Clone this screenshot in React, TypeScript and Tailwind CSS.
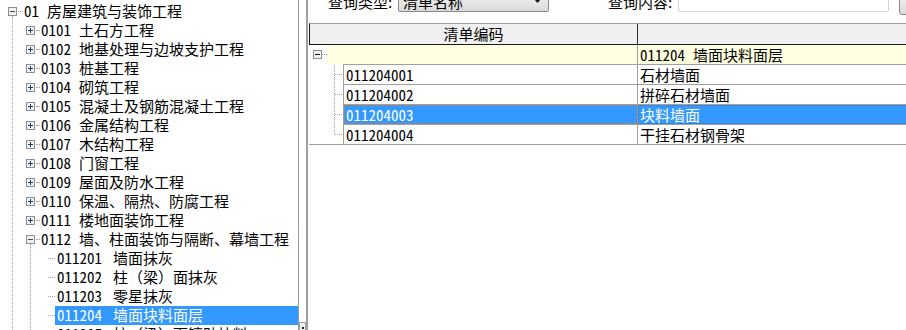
import React from 'react'

// ─── Data ─────────────────────────────────────────────────────────────────────
const chapters: [string, string][] = [
  ['0101', '土石方工程'],
  ['0102', '地基处理与边坡支护工程'],
  ['0103', '桩基工程'],
  ['0104', '砌筑工程'],
  ['0105', '混凝土及钢筋混凝土工程'],
  ['0106', '金属结构工程'],
  ['0107', '木结构工程'],
  ['0108', '门窗工程'],
  ['0109', '屋面及防水工程'],
  ['0110', '保温、隔热、防腐工程'],
  ['0111', '楼地面装饰工程'],
]

const sections: [string, string][] = [
  ['011201', '墙面抹灰'],
  ['011202', '柱（梁）面抹灰'],
  ['011203', '零星抹灰'],
  ['011204', '墙面块料面层'],
  ['011205', '柱（梁）面镶贴块料'],
]

const items: [string, string][] = [
  ['011204001', '石材墙面'],
  ['011204002', '拼碎石材墙面'],
  ['011204003', '块料墙面'],
  ['011204004', '干挂石材钢骨架'],
]

// ─── Expand / collapse box ────────────────────────────────────────────────────
function ExpandBox({ open, sign = '#1f3d7a' }: { open?: boolean; sign?: string }) {
  return (
    <svg width="9" height="9" viewBox="0 0 9 9" className="shrink-0">
      <rect x="0.5" y="0.5" width="8" height="8" fill="#f1f1f1" stroke="#8e8e8e" />
      <path d="M2 4.5h5" stroke={sign} />
      {!open && <path d="M4.5 2v5" stroke={sign} />}
    </svg>
  )
}

// half-width digits, like the old bitmap font
function Code({ children }: { children: string }) {
  return <span className="[font-feature-settings:'hwid']">{children}</span>
}

// ─── Left tree ────────────────────────────────────────────────────────────────
function Tree() {
  return (
    <div className="relative h-full w-[298px] shrink-0 overflow-hidden pt-[2px]">
      {/* connector lines */}
      <div className="absolute bottom-0 left-[12px] top-[16px] border-l border-dotted border-[#a0a0a0]" />
      <div className="absolute bottom-0 left-[30px] top-[244px] border-l border-dotted border-[#a0a0a0]" />

      <div className="flex h-[19px] items-center whitespace-nowrap pl-[8px]">
        <ExpandBox open sign="#3a4a6a" />
        <span className="ml-[1px] w-[5px] border-t border-dotted border-[#a0a0a0]" />
        <span className="ml-[1px]">
          <Code>01</Code>
        </span>
        <span className="ml-[8px]">房屋建筑与装饰工程</span>
      </div>

      {chapters.map(([code, name]) => (
        <div key={code} className="flex h-[19px] items-center whitespace-nowrap pl-[26px]">
          <ExpandBox />
          <span className="ml-[1px] w-[4px] border-t border-dotted border-[#a0a0a0]" />
          <span className="ml-[1px]">
            <Code>{code}</Code>
          </span>
          <span className="ml-[8px]">{name}</span>
        </div>
      ))}

      <div className="flex h-[19px] items-center whitespace-nowrap pl-[26px]">
        <ExpandBox open sign="#3a4a6a" />
        <span className="ml-[1px] w-[4px] border-t border-dotted border-[#a0a0a0]" />
        <span className="ml-[1px]">
          <Code>0112</Code>
        </span>
        <span className="ml-[8px]">墙、柱面装饰与隔断、幕墙工程</span>
      </div>

      {sections.map(([code, name]) => {
        const active = code === '011204'
        return (
          <div key={code} className="flex h-[19px] items-center whitespace-nowrap pl-[48px]">
            <span className="w-[7px] border-t border-dotted border-[#a0a0a0]" />
            <div
              className={`flex h-full flex-1 items-center pl-[2px] ${
                active ? 'bg-[#3399ff] text-white' : ''
              }`}
            >
              <Code>{code}</Code>
              <span className="ml-[11px]">{name}</span>
            </div>
          </div>
        )
      })}
    </div>
  )
}

// ─── Right pane ───────────────────────────────────────────────────────────────
function Toolbar() {
  return (
    <div className="-mt-[12px] flex h-[35px] shrink-0 items-end whitespace-nowrap pb-[11px]">
      <span className="mb-[3px] ml-[19px] w-[70px] shrink-0 leading-[15px]">查询类型:</span>
      <div className="flex h-[22px] w-[151px] shrink-0 items-center justify-between rounded-[2px] border border-[#8a8a8a] bg-linear-to-b from-[#f8f8f8] to-[#dadada] pl-[4px] pr-[7px]">
        <span className="leading-[15px]">清单名称</span>
        <svg width="7" height="4" viewBox="0 0 7 4">
          <path d="M0 0h7L3.5 4z" fill="#111" />
        </svg>
      </div>
      <span className="mb-[3px] ml-[59px] w-[70px] shrink-0 leading-[15px]">查询内容:</span>
      <div className="h-[22px] w-[211px] shrink-0 rounded-[2px] border border-[#cdd5dd] bg-white" />
      <div className="-mb-[3px] ml-[10px] h-[26px] w-[40px] shrink-0 rounded-[3px] border border-[#8a8a8a] bg-linear-to-b from-[#f4f4f4] to-[#dcdcdc]" />
    </div>
  )
}

function Grid() {
  return (
    <div className="flex w-[700px] shrink-0 flex-col">
      {/* Header */}
      <div className="flex h-[22px] border-b border-l border-t border-b-[#1a1a1a] border-l-[#1a1a1a] border-t-[#a0a0a0] bg-[#f0f0f0]">
        <div className="w-[328px] border-r border-[#303030] text-center leading-[20px]">清单编码</div>
        <div className="flex-1" />
      </div>

      {/* Body */}
      <div className="flex flex-col border-b border-[#a0a0a0]">
        {/* group row */}
        <div className="flex h-[19px]">
          <div className="flex w-[18px] items-center pl-[4px]">
            <ExpandBox open sign="#111" />
            <span className="w-[5px] border-t border-dotted border-[#a0a0a0]" />
          </div>
          <div className="flex flex-1 bg-[#ffffe1]">
            <div className="w-[311px] border-r border-[#a0a0a0]" />
            <div className="flex-1 whitespace-nowrap pl-[2px] leading-[19px]">
              <Code>011204</Code>
              <span className="ml-[8px]">墙面块料面层</span>
            </div>
          </div>
        </div>

        {/* child rows */}
        <div className="flex">
          <svg width="34" height="80" viewBox="0 0 34 80" className="shrink-0">
            <g stroke="#a0a0a0" strokeDasharray="1 1">
              <path d="M25.5 1V71" />
              <path d="M26 10.5H34" />
              <path d="M26 30.5H34" />
              <path d="M26 50.5H34" />
              <path d="M26 70.5H34" />
            </g>
          </svg>
          <div className="flex flex-1 flex-col border-l border-t border-[#a0a0a0]">
            {items.map(([code, name], i) => {
              const active = code === '011204003'
              const last = i === items.length - 1
              return (
                <div
                  key={code}
                  className={`flex whitespace-nowrap leading-[19px] ${
                    last ? 'h-[19px]' : 'h-[20px] border-b border-[#a0a0a0]'
                  } ${active ? 'bg-[#3399ff] text-white' : ''}`}
                >
                  <div
                    className={`w-[294px] border-r border-[#a0a0a0] pl-[2px] ${
                      active ? 'outline-1 -outline-offset-1 outline-dotted outline-[#d9772a]' : ''
                    }`}
                  >
                    <Code>{code}</Code>
                  </div>
                  <div
                    className={`flex-1 pl-[2px] ${
                      active ? 'outline-1 -outline-offset-1 outline-dotted outline-[#4a6f99]' : ''
                    }`}
                  >
                    {name}
                  </div>
                </div>
              )
            })}
          </div>
        </div>
      </div>
    </div>
  )
}

// ─── Page ─────────────────────────────────────────────────────────────────────
export default function App() {
  return (
    <div className="flex h-[330px] w-[906px] overflow-hidden bg-white font-['Noto_Sans_CJK_SC',sans-serif] text-[15px] text-black">
      <Tree />

      {/* splitter / scrollbar strip */}
      <div className="flex w-[8px] shrink-0 flex-col border-l border-[#9a9a9a]">
        <div className="flex-1" />
        <div className="flex h-[8px] items-end justify-center border border-b-0 border-[#a0a0a0] bg-[#f0f0f0]">
          <span className="mb-[1px] h-[2px] w-[2px] bg-[#222]" />
        </div>
      </div>

      <div className="flex min-w-0 flex-1 flex-col overflow-hidden border-l-2 border-[#a0a0a0] pl-[1px]">
        <Toolbar />
        <Grid />
      </div>
    </div>
  )
}
